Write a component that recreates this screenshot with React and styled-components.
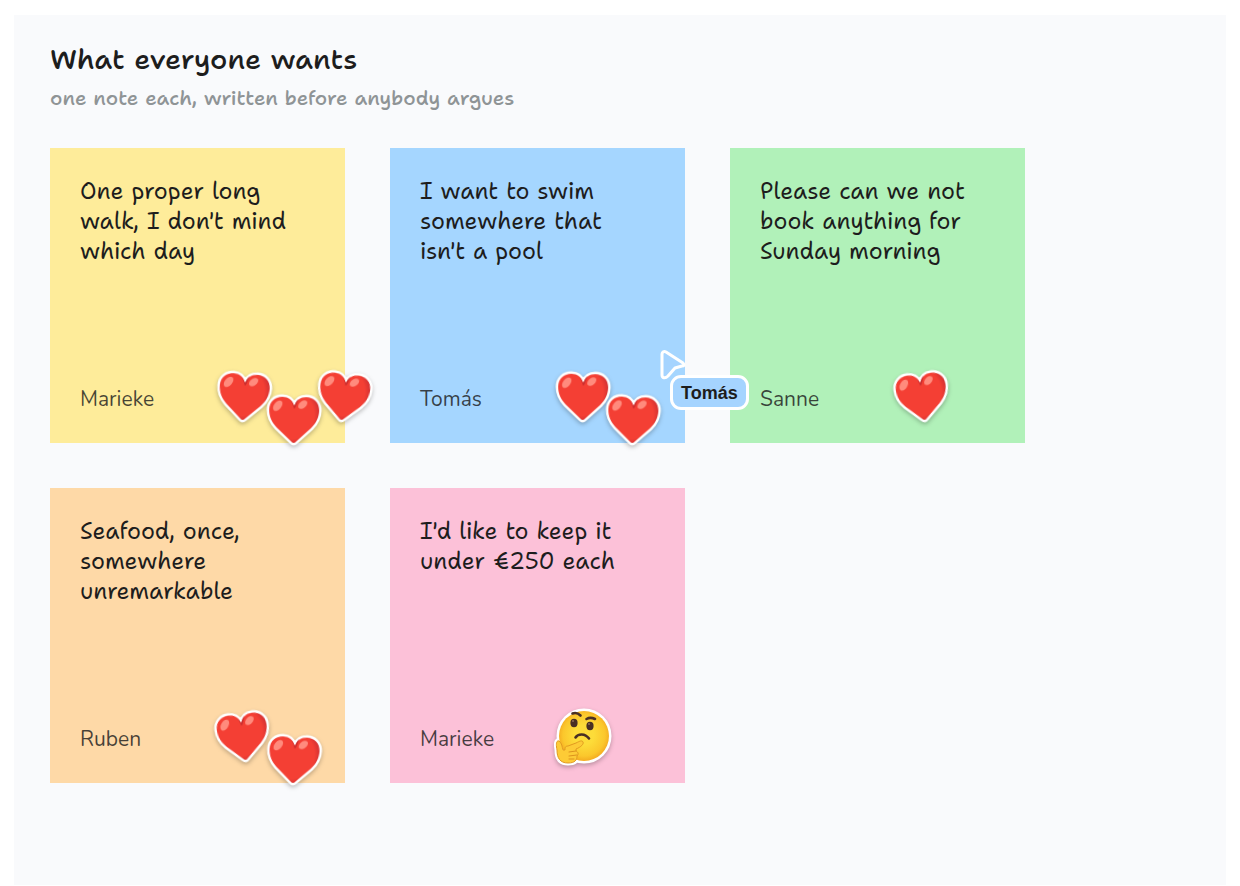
import React from "react";
import styled, { createGlobalStyle } from "styled-components";

const GlobalStyle = createGlobalStyle`
  * { box-sizing: border-box; }
  body { margin: 0; background: #ffffff; color: #1d1d1d; }
  h1, p { margin: 0; }
`;

const hand = `"Shantell Sans", "Open Sans", sans-serif`;

const Board = styled.main`
  margin: 15px 14px 0;
  padding: 24px 36px 40px;
  min-height: calc(100vh - 16px);
  background: #f9fafc;
`;

const Title = styled.h1`
  font: 500 28px/40px ${hand};
`;

const Subtitle = styled.p`
  margin-top: 7px;
  font: 500 20px/24px ${hand};
  color: #8f9496;
`;

const Notes = styled.section`
  margin-top: 38px;
  display: grid;
  grid-template-columns: repeat(auto-fill, 295px);
  gap: 45px;
`;

const Note = styled.article`
  position: relative;
  height: 295px;
  padding: 28px 30px;
  display: flex;
  flex-direction: column;
  justify-content: space-between;
  background: ${(p) => p.$color};
`;

const NoteText = styled.p`
  font: 450 23px/30px ${hand};
`;

const Author = styled.p`
  font: 400 21px/32px Nunito, "Open Sans", sans-serif;
  color: rgba(29, 29, 29, 0.82);
`;

const Sticker = styled.svg`
  position: absolute;
  left: ${(p) => p.$x}px;
  top: ${(p) => p.$y}px;
  width: 60px;
  height: 60px;
  transform: translate(-50%, -50%) rotate(${(p) => p.$turn}deg);
  filter: drop-shadow(0 2px 2px rgba(0, 0, 0, 0.25));
`;

const Cursor = styled.div`
  position: absolute;
  z-index: 2;
  left: 268px;
  top: 200px;
  display: flex;
  flex-direction: column;
`;

const Pointer = styled.svg`
  width: 30px;
  height: 32px;
`;

const CursorName = styled.span`
  margin: -5px 0 0 12px;
  padding: 5px 8px 3px;
  border: 3px solid #ffffff;
  border-radius: 11px;
  background: #a5d4ff;
  font: 700 18px/21px "Liberation Sans", Arial, sans-serif;
`;

const heartPath =
  "M30 52C29 52 28 51 27 50L13 37C8 32 5 26 5 19C5 11 11 6 18 6C24 6 28 9 30 15C32 9 36 6 42 6C49 6 55 11 55 19C55 26 52 32 47 37L33 50C32 51 31 52 30 52Z";

function Heart({ x, y, turn }) {
  return (
    <Sticker $x={x} $y={y} $turn={turn} viewBox="0 0 60 60" role="img" aria-label="Heart">
      <defs>
        <radialGradient id="heartRed" gradientUnits="userSpaceOnUse" cx="26" cy="24" r="32">
          <stop offset="0.75" stopColor="#f43f34" />
          <stop offset="1" stopColor="#c62b31" />
        </radialGradient>
      </defs>
      <path d={heartPath} fill="#fff" stroke="#fff" strokeWidth="5" strokeLinejoin="round" />
      <path d={heartPath} fill="url(#heartRed)" />
      <path d="M26 9C28 11 29 13 30 15C31 12 32 10 34 8C33 12 32 16 30 18C29 15 28 12 26 9Z" fill="#b9262c" opacity="0.7" />
      <ellipse cx="13.5" cy="15" rx="3.7" ry="6" transform="rotate(38 13.5 15)" fill="#ff8b7d" />
      <ellipse cx="38.5" cy="13.5" rx="3.4" ry="5.3" transform="rotate(48 38.5 13.5)" fill="#ff8b7d" />
    </Sticker>
  );
}

const handPath =
  "M6 33C3 32 3 37 4 42C4 50 7 55 15 55C22 55 24 52 24 48C26 46 25 44 23 43L23 41C28 39 31 36 30 34C29 32 27 33 23 35L15 38C12 38 12 40 12 42L10 42C9 39 9 35 6 33Z";

function Thinking({ x, y, turn }) {
  return (
    <Sticker $x={x} $y={y} $turn={turn} viewBox="0 0 60 60" role="img" aria-label="Thinking face">
      <defs>
        <radialGradient id="face" gradientUnits="userSpaceOnUse" cx="31" cy="27" r="28">
          <stop offset="0.35" stopColor="#fddc39" />
          <stop offset="0.75" stopColor="#fbc72c" />
          <stop offset="1" stopColor="#f1a01c" />
        </radialGradient>
      </defs>
      <g fill="#fff" stroke="#fff" strokeWidth="5" strokeLinejoin="round">
        <circle cx="31" cy="28" r="25" />
        <path d={handPath} />
      </g>
      <circle cx="31" cy="28" r="25" fill="url(#face)" />
      <ellipse cx="21" cy="15" rx="3.6" ry="4.2" fill="#482f24" />
      <ellipse cx="37" cy="18" rx="3.6" ry="4.2" fill="#482f24" />
      <circle cx="20" cy="13" r="1" fill="#8c6d54" />
      <circle cx="36" cy="16" r="1" fill="#8c6d54" />
      <g fill="none" stroke="#482f24" strokeWidth="2.6" strokeLinecap="round">
        <path d="M19.500 5.500C22 4.500 25 5 27.500 7.500" />
        <path d="M33.500 11C36 9.500 39 9.500 42 11" />
        <path d="M22.500 29.500C25 25.500 32 25 36 30.500" />
      </g>
      <path d={handPath} fill="#fdcb36" stroke="#e29a20" strokeWidth="1" strokeLinejoin="round" />
      <path d="M16 44L23 43M16 48L24 47M16 51L21 51" stroke="#dd931d" strokeWidth="1" strokeLinecap="round" />
    </Sticker>
  );
}

const notes = [
  {
    color: "#feec9a",
    text: "One proper long walk, I don't mind which day",
    author: "Marieke",
    stickers: [[194, 250, 4], [244, 273, 1], [294, 250, 7]],
  },
  {
    color: "#a5d6ff",
    text: "I want to swim somewhere that isn't a pool",
    author: "Tomás",
    stickers: [[193, 250, 1], [243, 273, 2]],
    cursor: "Tomás",
  },
  {
    color: "#b1f1b9",
    text: "Please can we not book anything for Sunday morning",
    author: "Sanne",
    stickers: [[192, 250, -7]],
  },
  {
    color: "#fed9a7",
    text: "Seafood, once, somewhere unremarkable",
    author: "Ruben",
    stickers: [[193, 250, -7], [244, 273, 3]],
  },
  {
    color: "#fcc1d8",
    text: "I'd like to keep it under €250 each",
    author: "Marieke",
    stickers: [[193, 250, 0]],
    thinking: true,
  },
];

export default function App() {
  return (
    <>
      <GlobalStyle />
      <Board>
        <Title>What everyone wants</Title>
        <Subtitle>one note each, written before anybody argues</Subtitle>
        <Notes>
          {notes.map((note) => {
            const Icon = note.thinking ? Thinking : Heart;
            return (
              <Note key={note.text} $color={note.color}>
                <NoteText>{note.text}</NoteText>
                <Author>{note.author}</Author>
                {note.stickers.map(([x, y, turn]) => (
                  <Icon key={x} x={x} y={y} turn={turn} />
                ))}
                {note.cursor && (
                  <Cursor>
                    <Pointer viewBox="0 0 30 32" aria-hidden="true">
                      <path
                        d="M4 6C4 4 6 3 8 4L25 15C27 17 26 18 24 18L17 20L10 28C7 31 4 30 4 27Z"
                        fill="#a5d4ff"
                        stroke="#fff"
                        strokeWidth="3"
                        strokeLinejoin="round"
                      />
                    </Pointer>
                    <CursorName>{note.cursor}</CursorName>
                  </Cursor>
                )}
              </Note>
            );
          })}
        </Notes>
      </Board>
    </>
  );
}
